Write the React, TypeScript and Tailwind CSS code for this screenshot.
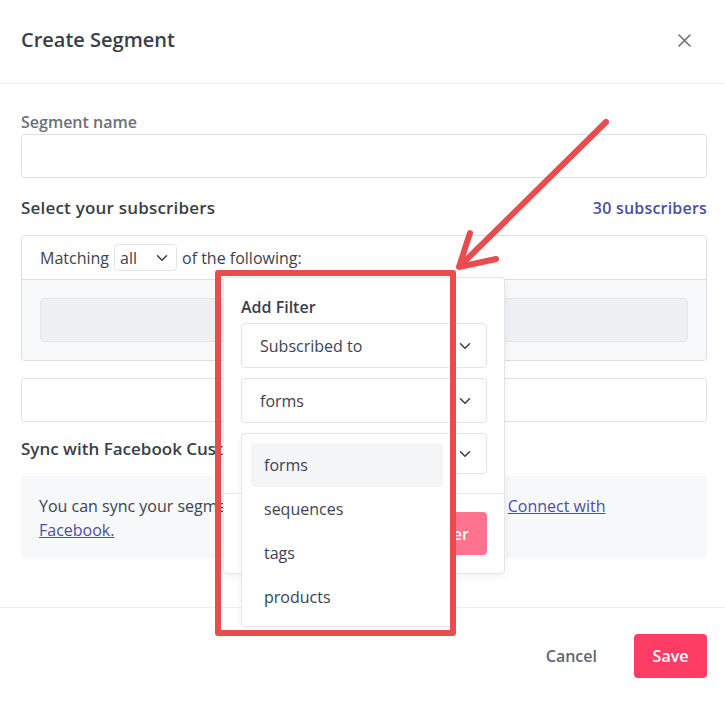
import React from 'react';

const Chevron: React.FC<{ className?: string }> = ({ className }) => (
  <svg width="12" height="8" viewBox="0 0 12 8" fill="none" className={className}>
    <path d="M1.5 1.8 6 6.2l4.5-4.4" stroke="#3d4350" strokeWidth="1.6" strokeLinecap="round" strokeLinejoin="round" />
  </svg>
);

const FilterSelect: React.FC<{ label?: string; height?: string }> = ({ label, height = 'h-[45px]' }) => (
  <div className={`flex items-center justify-between ${height} border border-[#e1e4e8] rounded-[4px] pl-[18px] pr-[15px]`}>
    <span className="text-[16px] text-[#3d4350]">{label}</span>
    <Chevron />
  </div>
);

const App: React.FC = () => {
  const options = ['forms', 'sequences', 'tags', 'products'];

  return (
    <div className="relative w-[725px] h-[701px] overflow-hidden bg-white font-['Open_Sans',sans-serif] text-[#3d4350]">
      {/* header */}
      <div className="flex items-center justify-between h-[84px] pl-[21px] pr-[18px] pb-[3px] border-b border-[#ebedf0]">
        <h1 className="text-[20px] font-semibold text-[#3a3f47]">Create Segment</h1>
        <button className="w-[20px] h-[20px] flex items-center justify-center mr-[13px]">
          <svg width="13" height="13" viewBox="0 0 13 13">
            <path d="M1 1l11 11M12 1 1 12" stroke="#6b7079" strokeWidth="1.6" strokeLinecap="round" />
          </svg>
        </button>
      </div>

      {/* body */}
      <div className="pl-[21px] pr-[18px] pt-[27px]">
        <label className="block text-[16px] leading-[23px] font-semibold text-[#6c7079]">Segment name</label>
        <div className="h-[44px] border border-[#dfe2e6] rounded-[4px]" />

        <div className="flex items-center justify-between mt-[18px] h-[24px]">
          <h2 className="text-[17px] font-semibold text-[#3a3f47] tracking-[0.2px]">Select your subscribers</h2>
          <span className="text-[16px] font-semibold text-[#4b4f9e] tracking-[0.2px]">30 subscribers</span>
        </div>

        <div className="mt-[15px] border border-[#dcdfe4] rounded-[4px] overflow-hidden">
          <div className="flex items-center h-[43px] px-[18px] text-[16px]">
            <span>Matching</span>
            <div className="flex items-center justify-between w-[63px] h-[27px] ml-[5px] mr-[5px] pl-[5px] pr-[8px] border border-[#e1e4e8] rounded-[4px]">
              <span>all</span>
              <Chevron />
            </div>
            <span>of the following:</span>
          </div>
          <div className="bg-[#f8f9fb] border-t border-[#dcdfe4] p-[18px]">
            <div className="h-[44px] bg-[#edf1f4] border border-[#e1e5ea] rounded-[4px]" />
          </div>
        </div>

        <div className="mt-[17px] h-[44px] border border-[#dfe2e6] rounded-[4px]" />

        <h2 className="mt-[15px] h-[24px] flex items-center text-[17px] font-semibold text-[#3a3f47]">
          Sync with Facebook Custom Audience
        </h2>

        <div className="mt-[15px] bg-[#f7f8fa] pt-[18px] pb-[16px] px-[18px] text-[16px] leading-[24px]">
          You can sync your segment with Facebook Custom Audiences.{' '}
          <a className="ml-[3px] text-[#4b4f9e] underline">
            Connect with
            <br />
            Facebook.
          </a>
        </div>
      </div>

      {/* footer */}
      <div className="mt-[49px] border-t border-[#ebedf0] flex items-center justify-end gap-[21px] px-[18px] pt-[26px]">
        <button className="px-[16px] h-[44px] text-[16px] font-semibold text-[#5f6670]">Cancel</button>
        <button className="w-[73px] h-[44px] rounded-[4px] bg-[#ff3d64] text-white text-[16px] font-semibold">Save</button>
      </div>

      {/* add filter popover */}
      <div className="absolute left-[223px] top-[277px] w-[282px] bg-white border border-[#e3e6ea] rounded-[4px] shadow-[0_2px_8px_rgba(0,0,0,0.06)]">
        <div className="px-[17px] pt-[17px] pb-[19px]">
          <div className="text-[16px] leading-[24px] font-semibold text-[#3a3f47] mb-[4px]">Add Filter</div>
          <div className="flex flex-col gap-[10px]">
            <FilterSelect label="Subscribed to" />
            <FilterSelect label="forms" />
            <FilterSelect height="h-[41px]" />
          </div>
        </div>
        <div className="border-t border-[#e3e6ea] flex justify-end px-[17px] py-[18px]">
          <button className="h-[43px] px-[18px] rounded-[4px] bg-[#ff7390] text-white text-[16px] font-semibold">Add Filter</button>
        </div>

        {/* options list */}
        <div className="absolute left-[17px] top-[155px] w-[212px] bg-white border border-[#e3e6ea] rounded-[4px] shadow-[0_2px_6px_rgba(0,0,0,0.05)] p-[9px] pb-[7px]">
          {options.map((o, i) => (
            <div
              key={o}
              className={`h-[44px] flex items-center px-[13px] rounded-[4px] text-[16px] text-[#3d4350] ${i === 0 ? 'bg-[#f4f5f7]' : ''}`}
            >
              {o}
            </div>
          ))}
        </div>
      </div>

      {/* annotation */}
      <div className="absolute left-[215px] top-[270px] w-[241px] h-[366px] border-[6px] border-[#e84c4c] rounded-[3px]" />
      <svg className="absolute left-0 top-0 pointer-events-none" width="725" height="701">
        <g stroke="#e84c4c" strokeWidth="6" strokeLinecap="round" strokeLinejoin="round" fill="none">
          <path d="M606 122 460 266" />
          <path d="M470 233 459 267 496 259" />
        </g>
      </svg>
    </div>
  );
};

export default App;
